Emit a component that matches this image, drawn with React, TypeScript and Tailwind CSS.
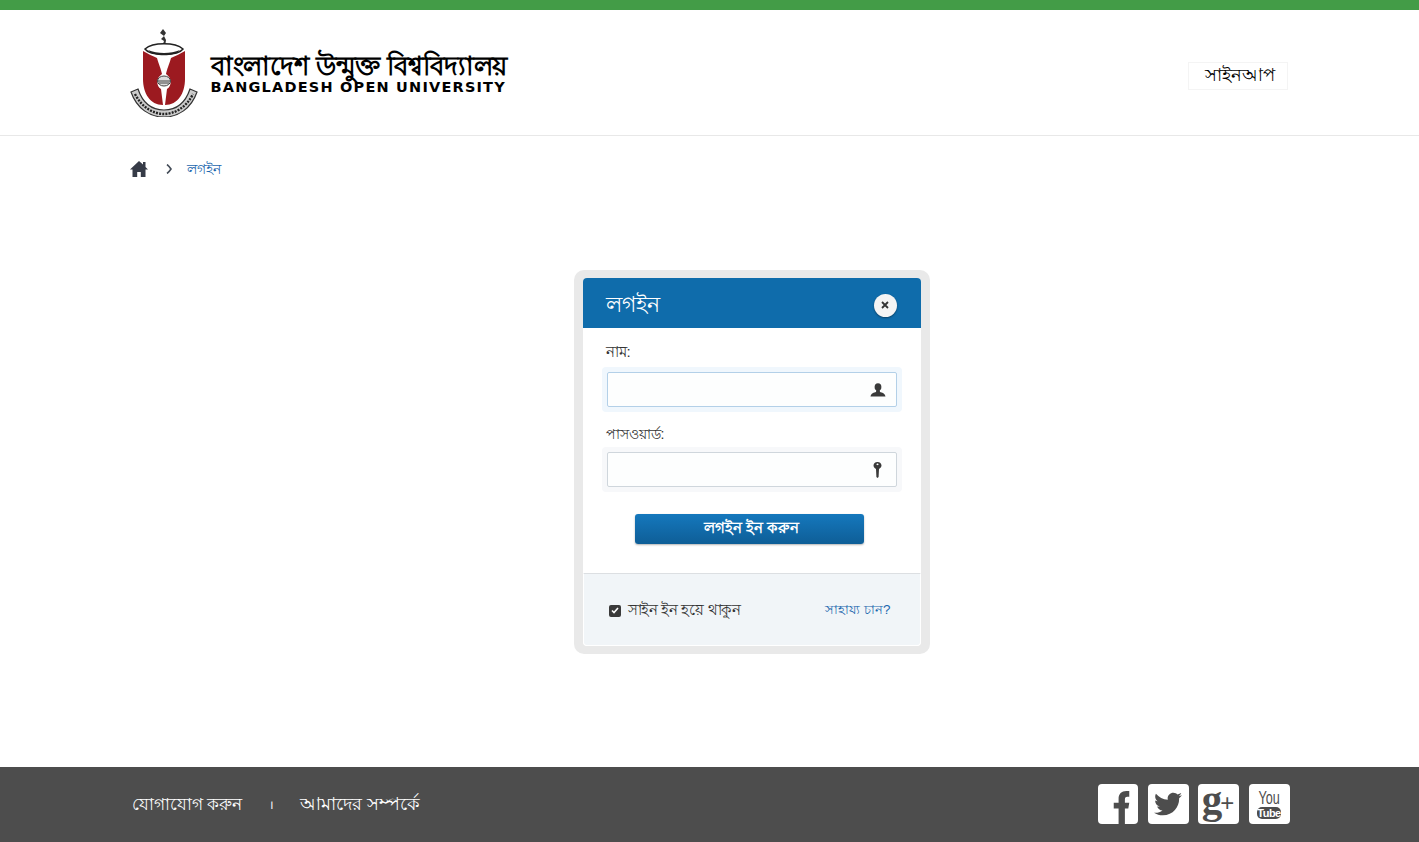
import { FaTwitter } from 'react-icons/fa';
import type { ReactNode } from 'react';

const bn = "font-['Liberation_Sans','Noto_Sans',sans-serif]";

function Emblem() {
  return (
    <svg width="68" height="88" viewBox="0 0 68 88" className="shrink-0">
      {/* flame + mast */}
      <path d="M33 0 L30 4 L34 7 L31 10 L34 12 L32 18 L35 18 L36 11 L34 7 L36 4 Z" fill="#333" />
      {/* dish */}
      <path d="M15 20 C23 13 45 13 53 20 C48 27 20 27 15 20 Z" fill="#fff" stroke="#222" strokeWidth="1.5" />
      <path d="M18 21 C27 25 41 25 50 21 C45 28 23 28 18 21 Z" fill="#222" />
      {/* shield */}
      <path d="M13 22 C18 25 23 27 27 29 C29 36 31 40 32 45 C26 49 26 57 31 60 L33 76 C20 76 13 64 13 50 Z" fill="#9c1a20" />
      <path d="M55 22 C50 25 45 27 41 29 C39 36 37 40 36 45 C42 49 42 57 37 60 L35 76 C48 76 55 64 55 50 Z" fill="#9c1a20" />
      {/* book in the centre */}
      <ellipse cx="34" cy="52" rx="6.5" ry="5" fill="#ddd" stroke="#444" strokeWidth="1" />
      <path d="M28 52 H40 M29 54 H39" stroke="#444" strokeWidth="1" />
      {/* ribbon */}
      <path d="M1 63 L8 60 C13 75 23 81 34 81 C45 81 55 75 60 60 L67 63 C61 80 48 88 34 88 C20 88 7 80 1 63 Z" fill="#ccc" stroke="#333" strokeWidth="1.2" />
      <path d="M5 65 C12 79 24 85 34 85 C44 85 56 79 63 65" fill="none" stroke="#222" strokeWidth="2.4" strokeDasharray="2 1.2" />
    </svg>
  );
}

function UserIcon() {
  return (
    <svg width="16" height="14" viewBox="0 0 16 14" fill="#3a3a3a">
      <ellipse cx="8" cy="4" rx="3.4" ry="3.8" />
      <path d="M6.3 7 H9.7 L10 9 C12 9.6 15 10.2 15.5 13.5 H0.5 C1 10.2 4 9.6 6 9 Z" />
    </svg>
  );
}

function KeyIcon() {
  return (
    <svg width="9" height="16" viewBox="0 0 9 16" fill="#3a3a3a">
      <path d="M4.5 0 C7 0 8.5 1.6 8.5 3.6 C8.5 5.2 7.4 6.4 6 6.9 L5.6 15 L4.5 16 L3.4 15 L3 6.9 C1.6 6.4 0.5 5.2 0.5 3.6 C0.5 1.6 2 0 4.5 0 Z M4.5 1.4 C3.9 1.4 3.5 1.8 3.5 2.3 C3.5 2.8 3.9 3.2 4.5 3.2 C5.1 3.2 5.5 2.8 5.5 2.3 C5.5 1.8 5.1 1.4 4.5 1.4 Z" fillRule="evenodd" />
    </svg>
  );
}

function Field({ label, icon, focus, labelClass }: { label: string; icon: ReactNode; focus?: boolean; labelClass: string }) {
  return (
    <div>
      <label className={`block px-[23px] h-[22px] leading-[22px] text-[#333] ${labelClass}`}>{label}</label>
      <div className={`mx-[19px] p-[5px] rounded-[4px] ${focus ? 'bg-[#f0f7fd]' : 'bg-[#f7f8fa]'}`}>
        <div className={`h-[35px] flex items-center justify-end pr-[10px] bg-[#fdfefe] border rounded-[2px] ${focus ? 'border-[#b3d0e8]' : 'border-[#cfd6dc]'}`}>
          {icon}
        </div>
      </div>
    </div>
  );
}

export default function App() {
  return (
    <div className={`h-screen min-h-[842px] flex flex-col bg-white ${bn}`}>
      <div className="h-[10px] bg-[#439c47]" />

      {/* Header */}
      <header className="h-[126px] shrink-0 border-b border-[#e8e8e8]">
        <div className="w-[1160px] mx-auto h-full flex items-center justify-between">
          <div className="flex items-center gap-[13px]">
            <Emblem />
            <div className="text-black">
              <p className="text-[25.6px] leading-[30px] font-bold tracking-[-0.17px] whitespace-nowrap">বাংলাদেশ উন্মুক্ত বিশ্ববিদ্যালয়</p>
              <p className="-mt-[2px] text-[14.5px] leading-[16px] font-bold tracking-[1.2px] whitespace-nowrap font-['DejaVu_Sans',sans-serif]">BANGLADESH OPEN UNIVERSITY</p>
            </div>
          </div>
          <a className="w-[100px] h-[28px] mr-[2px] mt-[6px] flex items-center justify-center pl-[5px] bg-white border border-[#f4f4f4] text-[17.5px] text-black">সাইনআপ</a>
        </div>
      </header>

      {/* Breadcrumb */}
      <nav className="w-[1160px] mx-auto h-[66px] shrink-0 flex items-center text-[14px]">
        <svg width="18" height="16" viewBox="0 0 18 16" fill="#363b47">
          <path d="M9 0 L13 3.6 V1 H15.5 V5.9 L18 8.4 H15.5 V16 H10.8 V11 H7.2 V16 H2.5 V8.4 H0 Z" />
        </svg>
        <svg width="6" height="10" viewBox="0 0 6 10" fill="none" stroke="#444c58" strokeWidth="1.6" className="ml-[18px]">
          <path d="M1 0.5 C3 2 4 3.5 5 5 C4 6.5 3 8 1 9.5" />
        </svg>
        <a className="ml-[15px] text-[#1a66ad]">লগইন</a>
      </nav>

      {/* Login card */}
      <main className="flex-1 w-[1160px] mx-auto pt-[68px] pl-[444px]">
        <div className="w-[356px] h-[384px] p-[8px] pl-[9px] pr-[9px] bg-[#e9e9e9] rounded-[10px]">
          <div className="h-full flex flex-col bg-white rounded-[4px] overflow-hidden">
            <div className="h-[50px] shrink-0 flex items-center justify-between pl-[23px] pr-[24px] bg-[#0f6cab] text-white">
              <h2 className="text-[22px] pt-[2px]">লগইন</h2>
              <button className="w-[23px] h-[23px] mt-[4px] flex items-center justify-center rounded-full bg-[#f4f4f4] shadow-[0_1px_2px_rgba(0,0,0,0.4)]">
                <svg width="8" height="8" viewBox="0 0 8 8" stroke="#333" strokeWidth="1.8"><path d="M1 1 L7 7 M7 1 L1 7" /></svg>
              </button>
            </div>

            <div className="flex-1 pt-[13px]">
              <Field label="নাম:" labelClass="mb-[4px] text-[15px]" focus icon={<UserIcon />} />
              <div className="h-[11px]" />
              <Field label="পাসওয়ার্ড:" labelClass="mb-[2px] text-[14px]" icon={<span className="mr-[4px] flex"><KeyIcon /></span>} />
              <button className="block ml-[52px] mt-[22px] pl-[5px] w-[229px] h-[30px] rounded-[3px] bg-gradient-to-b from-[#1578bd] to-[#0e5e97] shadow-[0_1px_2px_rgba(0,0,0,0.3)] text-[14.5px] font-bold text-white">
                লগইন ইন করুন
              </button>
            </div>

            <div className="h-[73px] shrink-0 flex items-center justify-between pt-[2px] pl-[25px] pr-[29px] bg-[#f1f5f8] border border-white border-t-[#dcdfe2] rounded-b-[4px]">
              <label className="flex items-center gap-[7px] text-[14.5px] tracking-[-0.3px] text-[#333]">
                <span className="w-[12px] h-[12px] rounded-[2px] bg-[#3a3a3a] flex items-center justify-center">
                  <svg width="8" height="7" viewBox="0 0 8 7" fill="none" stroke="#fff" strokeWidth="1.6"><path d="M1 3.5 L3 5.5 L7 1" /></svg>
                </span>
                সাইন ইন হয়ে থাকুন
              </label>
              <a className="text-[13.4px] text-[#1a66ad]">সাহায্য চান?</a>
            </div>
          </div>
        </div>
      </main>

      {/* Footer */}
      <footer className="h-[75px] shrink-0 bg-[#4d4d4d]">
        <div className="w-[1160px] mx-auto h-full flex items-center justify-between">
          <div className="flex items-center pl-[2px] text-white">
            <a className="text-[17.2px]">যোগাযোগ করুন</a>
            <span className="ml-[27px] mr-[26px] text-[12px]">।</span>
            <a className="text-[18px]">আমাদের সম্পর্কে</a>
          </div>
          <div className="flex items-center pb-[1px] text-[#4d4d4d]">
            <span className="w-[40px] h-[40px] rounded-[4px] bg-white flex items-end justify-center overflow-hidden">
              <svg width="17" height="33" viewBox="0 0 16 34" fill="#4d4d4d" className="ml-[8px]">
                <path d="M5 34 V18 H0 V12 H5 V8 C5 3 8 0 13 0 H16 V6 H14 C12 6 11.5 7 11.5 9 V12 H16 L15 18 H11.5 V34 Z" />
              </svg>
            </span>
            <span className="ml-[10px] w-[41px] h-[40px] rounded-[4px] bg-white flex items-center justify-center">
              <FaTwitter size={28} />
            </span>
            <span className="ml-[9px] w-[41px] h-[40px] rounded-[4px] bg-white flex items-center justify-center pb-[10px] font-['Liberation_Serif',serif] font-bold">
              <span className="text-[41px] leading-none">g</span>
              <span className="-ml-[2px] mt-[8px] text-[24px] leading-none font-normal font-['Liberation_Sans',sans-serif]">+</span>
            </span>
            <span className="ml-[10px] w-[41px] h-[40px] rounded-[4px] bg-white flex flex-col items-center justify-center font-['Liberation_Sans_Narrow','Liberation_Sans',sans-serif]">
              <span className="text-[18px] leading-[16px] scale-x-[0.7]">You</span>
              <span className="mt-[1px] w-[24px] text-center rounded-[5px] bg-[#4d4d4d] text-white text-[11px] leading-[12px] font-bold tracking-[-0.5px]">Tube</span>
            </span>
          </div>
        </div>
      </footer>
    </div>
  );
}
